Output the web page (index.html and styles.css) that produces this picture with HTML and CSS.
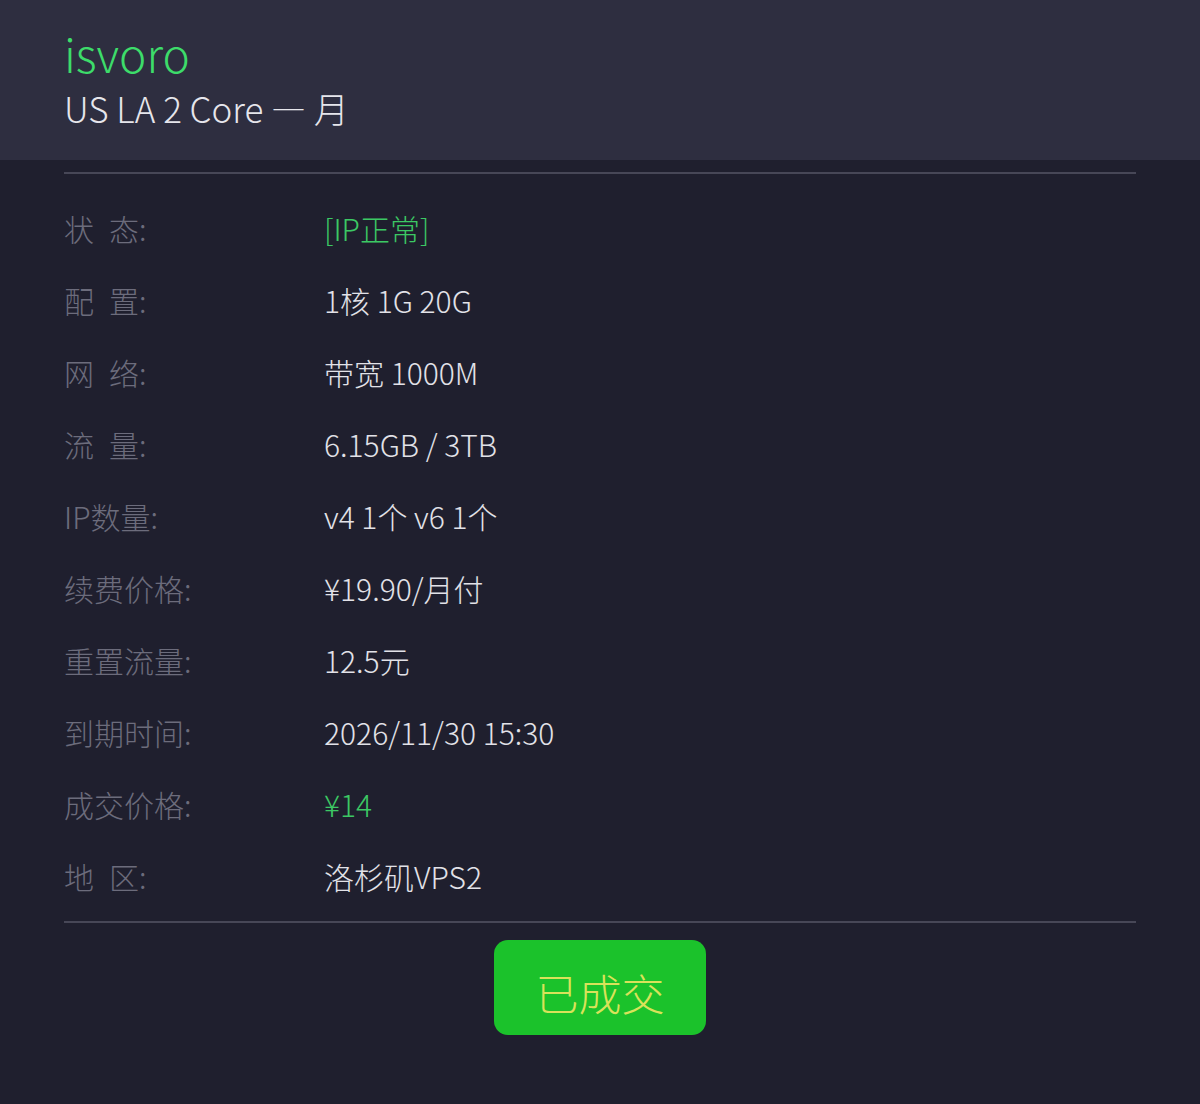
FILE: index.html
```html
<!DOCTYPE html>
<html lang="zh-CN">
<head>
    <meta charset="UTF-8">
    <meta name="viewport" content="width=device-width, initial-scale=1.0">
    <title>isvoro - US LA 2 Core</title>
    <link rel="stylesheet" href="styles.css">
</head>
<body>
    <div class="header">
        <h1 class="vendor">isvoro</h1>
        <div class="plan">US LA 2 Core — 月</div>
    </div>

    <div class="detail">
        <div class="rows">
            <div class="row">
                <span class="label">状&ensp;态:</span>
                <span class="value green">[IP正常]</span>
            </div>
            <div class="row">
                <span class="label">配&ensp;置:</span>
                <span class="value">1核 1G 20G</span>
            </div>
            <div class="row">
                <span class="label">网&ensp;络:</span>
                <span class="value">带宽 1000M</span>
            </div>
            <div class="row">
                <span class="label">流&ensp;量:</span>
                <span class="value">6.15GB / 3TB</span>
            </div>
            <div class="row">
                <span class="label">IP数量:</span>
                <span class="value">v4 1个 v6 1个</span>
            </div>
            <div class="row">
                <span class="label">续费价格:</span>
                <span class="value">¥19.90/月付</span>
            </div>
            <div class="row">
                <span class="label">重置流量:</span>
                <span class="value">12.5元</span>
            </div>
            <div class="row">
                <span class="label">到期时间:</span>
                <span class="value">2026/11/30 15:30</span>
            </div>
            <div class="row">
                <span class="label">成交价格:</span>
                <span class="value green">¥14</span>
            </div>
            <div class="row">
                <span class="label">地&ensp;区:</span>
                <span class="value">洛杉矶VPS2</span>
            </div>
        </div>

        <div class="actions">
            <button class="sold" disabled>已成交</button>
        </div>
    </div>
</body>
</html>
```

FILE: styles.css
```css
* {
    margin: 0;
    padding: 0;
    box-sizing: border-box;
}

body {
    font-family: "Noto Sans CJK SC", "Noto Sans", sans-serif;
    font-weight: 300;
    background: #1f1f2e;
    color: #e4e4ea;
    min-height: 100vh;
}

.header {
    background: #2e2e40;
    height: 160px;
    padding: 22px 64px 0;
}

.vendor {
    font-size: 46px;
    font-weight: 300;
    line-height: 62px;
    color: #3ddc6a;
}

.plan {
    font-size: 35px;
    line-height: 48px;
    color: #e6e6ec;
}

.detail {
    padding: 12px 64px 0;
}

.rows {
    border-top: 2px solid #474757;
    border-bottom: 2px solid #474757;
    padding: 18px 0 9px;
}

.row {
    display: flex;
    align-items: center;
    height: 72px;
    font-size: 30px;
}

.label {
    width: 260px;
    flex-shrink: 0;
    color: #6c6c7c;
}

.value {
    color: #e2e2e8;
}

.value.green {
    color: #3cc864;
}

.actions {
    display: flex;
    justify-content: center;
    padding-top: 17px;
}

.sold {
    width: 212px;
    height: 95px;
    border: none;
    border-radius: 14px;
    background: #1bc22b;
    color: #d9e25a;
    font-family: inherit;
    font-weight: 300;
    font-size: 43px;
    padding-top: 8px;
}
```
